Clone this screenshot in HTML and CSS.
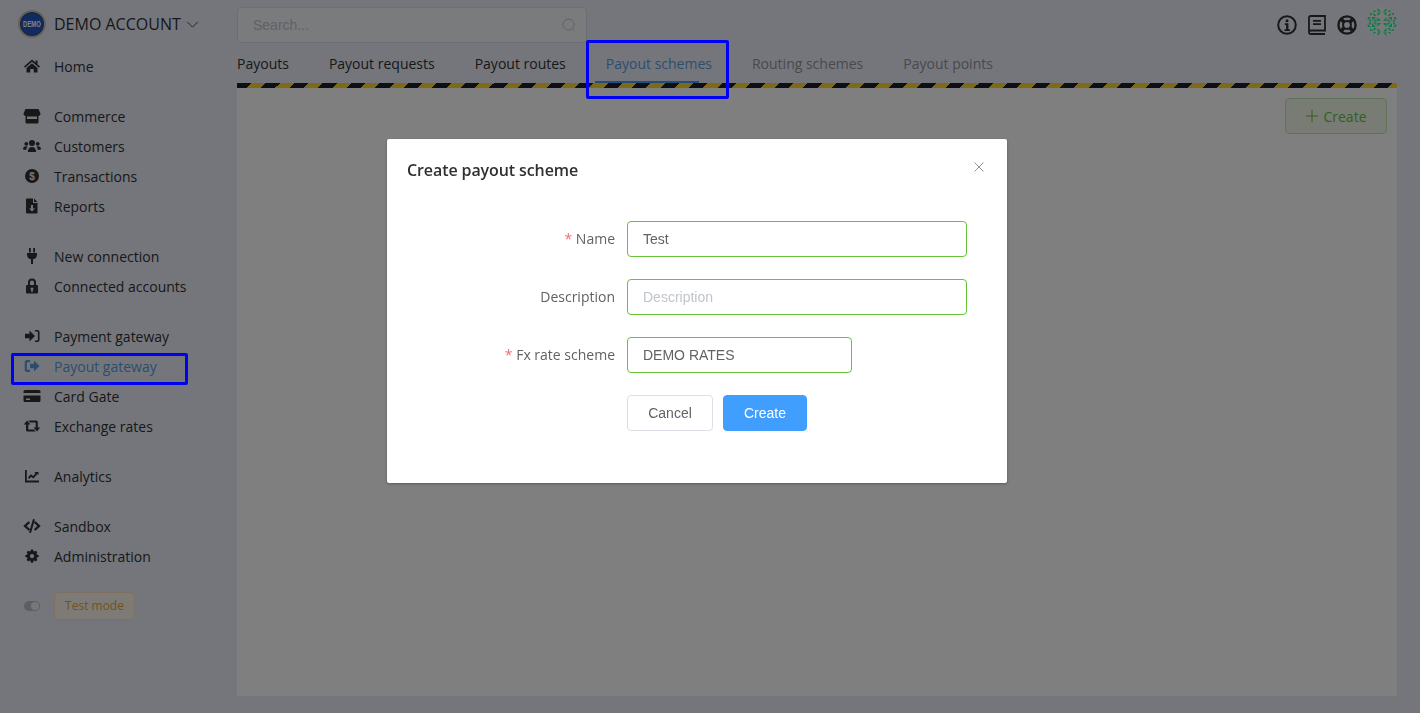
FILE: index.html
```html
<!DOCTYPE html>
<html lang="en">
<head>
    <meta charset="UTF-8">
    <title>Create payout scheme</title>
    <link rel="stylesheet" href="styles.css">
</head>
<body>
    <div class="layout">
        <aside class="sidebar">
            <div class="account">
                <svg class="avatar" viewBox="0 0 28 28">
                    <circle cx="14" cy="14" r="14" fill="#c4c4c8"/>
                    <circle cx="14" cy="14" r="12" fill="#44464c"/>
                    <circle cx="14" cy="14" r="11" fill="#1f56c4"/>
                    <text class="avatar-text" transform="translate(14 17.200) scale(.66 1)">DEMO</text>
                </svg>
                <span class="account-name">DEMO ACCOUNT</span>
                <svg class="chevron" viewBox="0 0 14 8"><path d="M1 1l6 6 6-6" fill="none" stroke="currentColor" stroke-width="1"/></svg>
            </div>

            <ul class="nav-group">
                <li class="nav-item">
                    <svg class="nav-icon" viewBox="0 0 18 16"><path d="M9 1.500L1 8.500l1 1.200 7-6 7 6 1-1.200-2.500-2.200V2.500h-2v2zM3.500 10L9 5.200 14.500 10v4.500h-3.800v-3.500H7.300v3.500H3.500z"/></svg>
                    Home
                </li>
            </ul>
            <ul class="nav-group">
                <li class="nav-item">
                    <svg class="nav-icon" viewBox="0 0 18 16"><path d="M2.500 1h13L17.500 5.500c0 1.500-1 2.300-2 2.300v6.700a1 1 0 0 1-1 1h-11a1 1 0 0 1-1-1V7.800c-1 0-2-.8-2-2.300zM4 8.500V11h10V8.500z" fill-rule="evenodd"/></svg>
                    Commerce
                </li>
                <li class="nav-item">
                    <svg class="nav-icon" viewBox="0 0 18 16"><circle cx="9" cy="5" r="3"/><circle cx="3.300" cy="5.800" r="1.900"/><circle cx="14.700" cy="5.800" r="1.900"/><path d="M4.800 14c0-3 1.500-5 4.200-5s4.200 2 4.200 5zM0 11.500C0 9.500 1 8.300 3 8.300c.6 0 1.200.2 1.500.5-.8.8-1.200 1.900-1.300 3.200zM18 11.500c0-2-1-3.200-3-3.200-.6 0-1.200.2-1.500.5.800.8 1.200 1.900 1.300 3.200z"/></svg>
                    Customers
                </li>
                <li class="nav-item">
                    <svg class="nav-icon" viewBox="0 0 18 16"><circle cx="9" cy="8" r="7"/><text x="9" y="11.500" class="dollar">$</text></svg>
                    Transactions
                </li>
                <li class="nav-item">
                    <svg class="nav-icon" viewBox="0 0 18 16"><path d="M4 0.500h6v4.500h4.500v9.500a1 1 0 0 1-1 1H4a1 1 0 0 1-1-1V1.500a1 1 0 0 1 1-1zM8 7v3.500H6l3 3 3-3h-2V7zM11 .500l3.500 3.500H11z" fill-rule="evenodd"/></svg>
                    Reports
                </li>
            </ul>
            <ul class="nav-group">
                <li class="nav-item">
                    <svg class="nav-icon" viewBox="0 0 18 16"><path d="M6 0h1.800v4.500H6zM10.200 0H12v4.500h-1.800zM4 5h10v1.800c0 2.500-1.500 4.100-4 4.500V16H8v-4.700c-2.500-.4-4-2-4-4.500z"/></svg>
                    New connection
                </li>
                <li class="nav-item">
                    <svg class="nav-icon" viewBox="0 0 18 16"><path d="M5 7V4.500a4 4 0 0 1 8 0V7h1a1 1 0 0 1 1 1v6.500a1 1 0 0 1-1 1H4a1 1 0 0 1-1-1V8a1 1 0 0 1 1-1zm2 0h4V4.500a2 2 0 0 0-4 0zm2 2.500a1.500 1.500 0 0 0-.7 2.800V14h1.400v-1.700A1.500 1.500 0 0 0 9 9.500z" fill-rule="evenodd"/></svg>
                    Connected accounts
                </li>
            </ul>
            <ul class="nav-group">
                <li class="nav-item">
                    <svg class="nav-icon" viewBox="0 0 18 16"><path d="M2 5.800h4.500V2.500L12 8l-5.500 5.500v-3.300H2zM12 2h2.500A2 2 0 0 1 16.500 4v8a2 2 0 0 1-2 2H12v-1.600h2.300a.6.6 0 0 0 .6-.6V4.200a.6.6 0 0 0-.6-.6H12z"/></svg>
                    Payment gateway
                </li>
                <li class="nav-item is-active">
                    <svg class="nav-icon" viewBox="0 0 18 16"><path d="M7 5.800h4V2.500L16.500 8 11 13.500v-3.300H7zM7 2H4.200A2.500 2.500 0 0 0 1.700 4.500v7A2.500 2.500 0 0 0 4.200 14H7v-2.200H4.400a.5.5 0 0 1-.5-.5V4.700a.5.5 0 0 1 .5-.5H7z"/></svg>
                    Payout gateway
                </li>
                <li class="nav-item">
                    <svg class="nav-icon" viewBox="0 0 18 16"><path d="M2 2h14a1.500 1.500 0 0 1 1.500 1.500V5H.5V3.500A1.500 1.500 0 0 1 2 2zM.5 7.500h17v5A1.500 1.500 0 0 1 16 14H2a1.500 1.500 0 0 1-1.500-1.500zM3 10.500V12h4v-1.500z" fill-rule="evenodd"/></svg>
                    Card Gate
                </li>
                <li class="nav-item">
                    <svg class="nav-icon" viewBox="0 0 18 16"><path d="M4 2.500L7.500 6.500H5.300v5H11l1.700 2H4.500a1.500 1.500 0 0 1-1.500-1.500V6.500H.8zM14 13.500l-3.500-4h2.200v-5H7L5.300 2.500h8a1.500 1.500 0 0 1 1.500 1.500v5.500h2.400z"/></svg>
                    Exchange rates
                </li>
            </ul>
            <ul class="nav-group">
                <li class="nav-item">
                    <svg class="nav-icon" viewBox="0 0 18 16"><path d="M2 2h1.800v10.500H16V14.500H2zM5 9.500l2.800-3.200 2.400 1.700 2.300-2.800-1.200-1.200H15.500V7.200l-1.100-1.100-3.900 4.300-2.400-1.700-1.800 2.200z"/></svg>
                    Analytics
                </li>
            </ul>
            <ul class="nav-group">
                <li class="nav-item">
                    <svg class="nav-icon" viewBox="0 0 18 16"><path d="M5.500 3.200l1.600 1.600L3.700 8l3.400 3.200-1.600 1.600L.3 8zM12.500 3.200l-1.600 1.600L14.300 8l-3.400 3.200 1.600 1.600L17.700 8zM10 1l2 .6L8 15l-2-.6z"/></svg>
                    Sandbox
                </li>
                <li class="nav-item">
                    <svg class="nav-icon" viewBox="0 0 18 16"><path d="M7.600 0h2.800l.4 2.100 1.300.6 1.800-1.100 2 2-1.100 1.800.6 1.300 2.100.4v2.800l-2.100.4-.6 1.300 1.100 1.800-2 2-1.800-1.100-1.300.6-.4 2.100H7.600l-.4-2.100-1.300-.6-1.800 1.100-2-2 1.100-1.800-.6-1.300L.5 9.900V7.100l2.100-.4.6-1.300L2.100 3.600l2-2 1.800 1.100 1.300-.6zM9 5.800a2.700 2.700 0 1 0 0 5.400 2.700 2.700 0 0 0 0-5.400z" fill-rule="evenodd" transform="translate(2 1.400) scale(.78)"/></svg>
                    Administration
                </li>
            </ul>
            <div class="test-row">
                <span class="switch"><span class="switch-knob"></span></span>
                <span class="test-tag">Test mode</span>
            </div>
        </aside>

        <main class="main">
            <header class="topbar">
                <div class="search">
                    <span class="search-text">Search...</span>
                    <svg class="search-icon" viewBox="0 0 14 14"><circle cx="6.500" cy="6.500" r="5.500" fill="none" stroke="currentColor" stroke-width="1"/><path d="M10.500 10.500l2 2" stroke="currentColor" stroke-width="1"/></svg>
                </div>
                <div class="top-icons">
                    <svg class="top-icon" viewBox="0 0 20 20"><circle cx="10" cy="10" r="8.800" fill="none" stroke="currentColor" stroke-width="2"/><circle cx="10" cy="5.700" r="1.500" fill="currentColor"/><path d="M7.800 8.300h3.600v6H13V16H7.500v-1.700h1.600v-4.300H7.800z" fill="currentColor"/></svg>
                    <svg class="top-icon" viewBox="0 0 20 20"><path d="M2 17V2.500A1.500 1.500 0 0 1 3.500 1H18v14.500H4A2 2 0 0 0 2 17.500a1.700 1.700 0 0 0 2 1.500h14" fill="none" stroke="currentColor" stroke-width="1.800"/><path d="M6 5h8v1.700H6zM6 8.200h8v1.700H6z" fill="currentColor"/></svg>
                    <svg class="top-icon" viewBox="0 0 20 20"><circle cx="10" cy="10" r="8.600" fill="none" stroke="currentColor" stroke-width="2.400"/><circle cx="10" cy="10" r="3.900" fill="none" stroke="currentColor" stroke-width="2"/><path d="M3.600 3.600l3.800 3.800M16.400 3.600l-3.800 3.800M3.600 16.400l3.800-3.800M16.400 16.400l-3.800-3.800" stroke="currentColor" stroke-width="3.600"/></svg>
                    <svg class="identicon" viewBox="0 0 30 30">
                        <defs>
                            <g id="quarter">
                                <path d="M10.500 1l3.500 3.500h-3.500zM6.500 2.500l3 2.500h-3zM3 6h3l-3 3zM6.500 5.500l3 3.500h-3zM10.500 5.500h3.500l-3.500 3.500zM.5 10H4l-3.500 3.500zM5 10h4l-4 4zM10.500 10l3.500 4h-3.500zM1.500 14.500h3l-1.500-3zM6 14.500h3.500v-3z"/>
                            </g>
                            <clipPath id="disc"><circle cx="15" cy="15" r="15"/></clipPath>
                        </defs>
                        <g clip-path="url(#disc)" class="identicon-tiles">
                            <rect width="30" height="30" class="identicon-bg"/>
                            <use href="#quarter"/>
                            <use href="#quarter" transform="translate(30 0) scale(-1 1)"/>
                            <use href="#quarter" transform="translate(0 30) scale(1 -1)"/>
                            <use href="#quarter" transform="translate(30 30) scale(-1 -1)"/>
                        </g>
                    </svg>
                </div>
            </header>

            <nav class="tabs">
                <span class="tab">Payouts</span>
                <span class="tab">Payout requests</span>
                <span class="tab">Payout routes</span>
                <span class="tab is-active">Payout schemes</span>
                <span class="tab is-muted">Routing schemes</span>
                <span class="tab is-muted">Payout points</span>
            </nav>

            <section class="panel">
                <div class="panel-actions">
                    <button class="btn-create" type="button">
                        <svg class="plus" viewBox="0 0 12 12"><path d="M6 0v12M0 6h12" stroke="currentColor" stroke-width="1" fill="none"/></svg>
                        Create
                    </button>
                </div>
            </section>
        </main>
    </div>

    <div class="overlay">
        <div class="modal">
            <div class="modal-head">
                <span class="modal-title">Create payout scheme</span>
                <svg class="modal-close" viewBox="0 0 10 10"><path d="M.5.500l9 9M9.500.500l-9 9" stroke="currentColor" stroke-width="1"/></svg>
            </div>
            <form class="form">
                <div class="form-row">
                    <label class="form-label" for="schemeName"><span class="req">*</span> Name</label>
                    <input class="form-input" id="schemeName" type="text" value="Test">
                </div>
                <div class="form-row">
                    <label class="form-label" for="schemeDesc">Description</label>
                    <input class="form-input" id="schemeDesc" type="text" placeholder="Description">
                </div>
                <div class="form-row">
                    <label class="form-label" for="schemeRate"><span class="req">*</span> Fx rate scheme</label>
                    <input class="form-input form-input-short" id="schemeRate" type="text" value="DEMO RATES">
                </div>
                <div class="form-actions">
                    <button class="btn" type="button">Cancel</button>
                    <button class="btn btn-primary" type="button">Create</button>
                </div>
            </form>
        </div>
    </div>

    <div class="mark mark-tab"></div>
    <div class="mark mark-nav"></div>
</body>
</html>
```

FILE: styles.css
```css
:root {
    --text-color: #303133;
    --label-color: #606266;
    --active-color: #5b9bdc;
    --green: #67c23a;
}
* {
    box-sizing: border-box;
}
html, body {
    height: 100%;
}
body {
    margin: 0;
    font-family: 'Open Sans', sans-serif;
    font-size: 14px;
    color: var(--text-color);
    background-color: #e9edf8;
    overflow: hidden;
}
.layout {
    display: flex;
    height: 713px;
}

/* sidebar */
.sidebar {
    width: 237px;
    flex: none;
    padding-top: 10px;
}
.account {
    display: flex;
    align-items: center;
    height: 28px;
    padding-left: 18px;
    margin-bottom: 13px;
}
.avatar {
    width: 28px;
    height: 28px;
    margin-right: 8px;
}
.avatar-text {
    font-family: 'Liberation Sans', sans-serif;
    font-size: 9px;
    font-weight: 700;
    fill: #fff;
    text-anchor: middle;
}
.account-name {
    font-size: 16px;
}
.chevron {
    width: 13px;
    height: 7px;
    margin-left: 5px;
}
.nav-group {
    list-style: none;
    margin: 0 0 20px;
    padding: 0;
}
.nav-item {
    display: flex;
    align-items: center;
    height: 30px;
    padding-left: 23px;
}
.nav-icon {
    width: 18px;
    height: 16px;
    margin-right: 13px;
    fill: currentColor;
    flex: none;
}
.dollar {
    font-family: 'Liberation Sans', sans-serif;
    font-size: 10px;
    font-weight: 700;
    fill: #e9edf8;
    text-anchor: middle;
}
.nav-item.is-active {
    color: var(--active-color);
}
.test-row {
    display: flex;
    align-items: center;
    padding: 1px 0 0 24px;
}
.switch {
    width: 16px;
    height: 10px;
    border-radius: 5px;
    background-color: #b8bcc4;
    margin-right: 14px;
    position: relative;
}
.switch-knob {
    position: absolute;
    right: 1px;
    top: 1px;
    width: 8px;
    height: 8px;
    border-radius: 50%;
    background-color: #f0f0f0;
}
.test-tag {
    height: 28px;
    width: 81px;
    line-height: 26px;
    text-align: center;
    font-size: 12px;
    color: #e6a23c;
    background-color: #fdf6ec;
    border: 1px solid #f8e3c5;
    border-radius: 4px;
}

/* top area */
.main {
    width: 1160px;
    flex: none;
}
.topbar {
    display: flex;
    justify-content: space-between;
    align-items: flex-start;
    height: 46px;
    padding-top: 7px;
}
.search {
    display: flex;
    align-items: center;
    justify-content: space-between;
    width: 350px;
    height: 36px;
    padding: 0 10px 0 15px;
    background-color: #f5f6fb;
    border: 1px solid #dcdfe6;
    border-radius: 4px;
    font-family: 'Liberation Sans', sans-serif;
}
.search-text {
    color: #c0c4cc;
}
.search-icon {
    width: 14px;
    height: 14px;
    color: #c0c4cc;
}
.top-icons {
    display: flex;
    align-items: center;
    height: 30px;
    color: #303133;
}
.top-icon {
    width: 20px;
    height: 20px;
    margin: 5px 10px 0 0;
}
.identicon {
    width: 30px;
    height: 30px;
}
.identicon-bg {
    fill: #f2f3f4;
}
.identicon-tiles {
    fill: #28f098;
}

/* tabs */
.tabs {
    position: relative;
    display: flex;
    gap: 40px;
    height: 37px;
    padding-top: 8px;
    line-height: 19px;
}
.tab.is-active {
    color: var(--active-color);
}
.tab.is-active::after {
    content: "";
    position: absolute;
    left: 358px;
    bottom: 0;
    width: 104px;
    height: 2px;
    background-color: #409eff;
}
.tab.is-muted {
    color: #909399;
}
.panel {
    height: 613px;
    background-color: #fff;
    border-top: 5px solid transparent;
    border-image: repeating-linear-gradient(-45deg, #1c1f2b 0 10px, #ffd72e 10px 20px) 5;
    padding: 10px;
}
.panel-actions {
    display: flex;
    justify-content: flex-end;
}
.btn-create {
    display: flex;
    align-items: center;
    justify-content: center;
    gap: 5px;
    width: 102px;
    height: 36px;
    padding: 0 0 0 1px;
    font-family: 'Open Sans', sans-serif;
    font-size: 14px;
    color: var(--green);
    background-color: #f0f9eb;
    border: 1px solid #c2e7b0;
    border-radius: 4px;
}
.plus {
    width: 12px;
    height: 12px;
}

/* modal */
.overlay {
    position: fixed;
    inset: 0;
    background-color: rgba(0, 0, 0, 0.5);
    padding-top: 139px;
    display: flex;
    justify-content: center;
    align-items: flex-start;
}
.modal {
    width: 620px;
    height: 344px;
    margin-right: 26px;
    background-color: #fff;
    border-radius: 2px;
    box-shadow: 0 1px 3px rgba(0, 0, 0, 0.3);
}
.modal-head {
    display: flex;
    justify-content: space-between;
    padding: 20px 23px 0 20px;
}
.modal-title {
    font-size: 16px;
    font-weight: 600;
    line-height: 22px;
    letter-spacing: -0.1px;
    color: #303133;
}
.modal-close {
    width: 10px;
    height: 10px;
    margin-top: 3px;
    color: #909399;
}
.form {
    padding: 40px 40px 0 0;
}
.form-row {
    display: flex;
    align-items: center;
    margin-bottom: 22px;
}
.form-label {
    width: 240px;
    flex: none;
    padding: 0 12px 2px 0;
    text-align: right;
    color: var(--label-color);
}
.req {
    color: #f56c6c;
}
.form-input {
    width: 340px;
    height: 36px;
    padding: 0 15px;
    font-family: 'Liberation Sans', sans-serif;
    font-size: 14px;
    color: var(--label-color);
    background-color: #fff;
    border: 1px solid var(--green);
    border-radius: 4px;
    outline: none;
}
.form-input::placeholder {
    color: #c0c4cc;
}
.form-input-short {
    width: 225px;
}
.form-actions {
    display: flex;
    gap: 10px;
    padding-left: 240px;
}
.btn {
    height: 36px;
    width: 86px;
    font-family: 'Liberation Sans', sans-serif;
    font-size: 14px;
    color: var(--label-color);
    background-color: #fff;
    border: 1px solid #dcdfe6;
    border-radius: 4px;
}
.btn-primary {
    width: 84px;
    color: #fff;
    background-color: #409eff;
    border-color: #409eff;
}

/* blue annotation boxes drawn over the shot */
.mark {
    position: absolute;
    border: 3px solid #0000f5;
    border-radius: 2px;
}
.mark-tab {
    left: 586px;
    top: 40px;
    width: 143px;
    height: 59px;
}
.mark-nav {
    left: 11px;
    top: 353px;
    width: 177px;
    height: 32px;
}
```
